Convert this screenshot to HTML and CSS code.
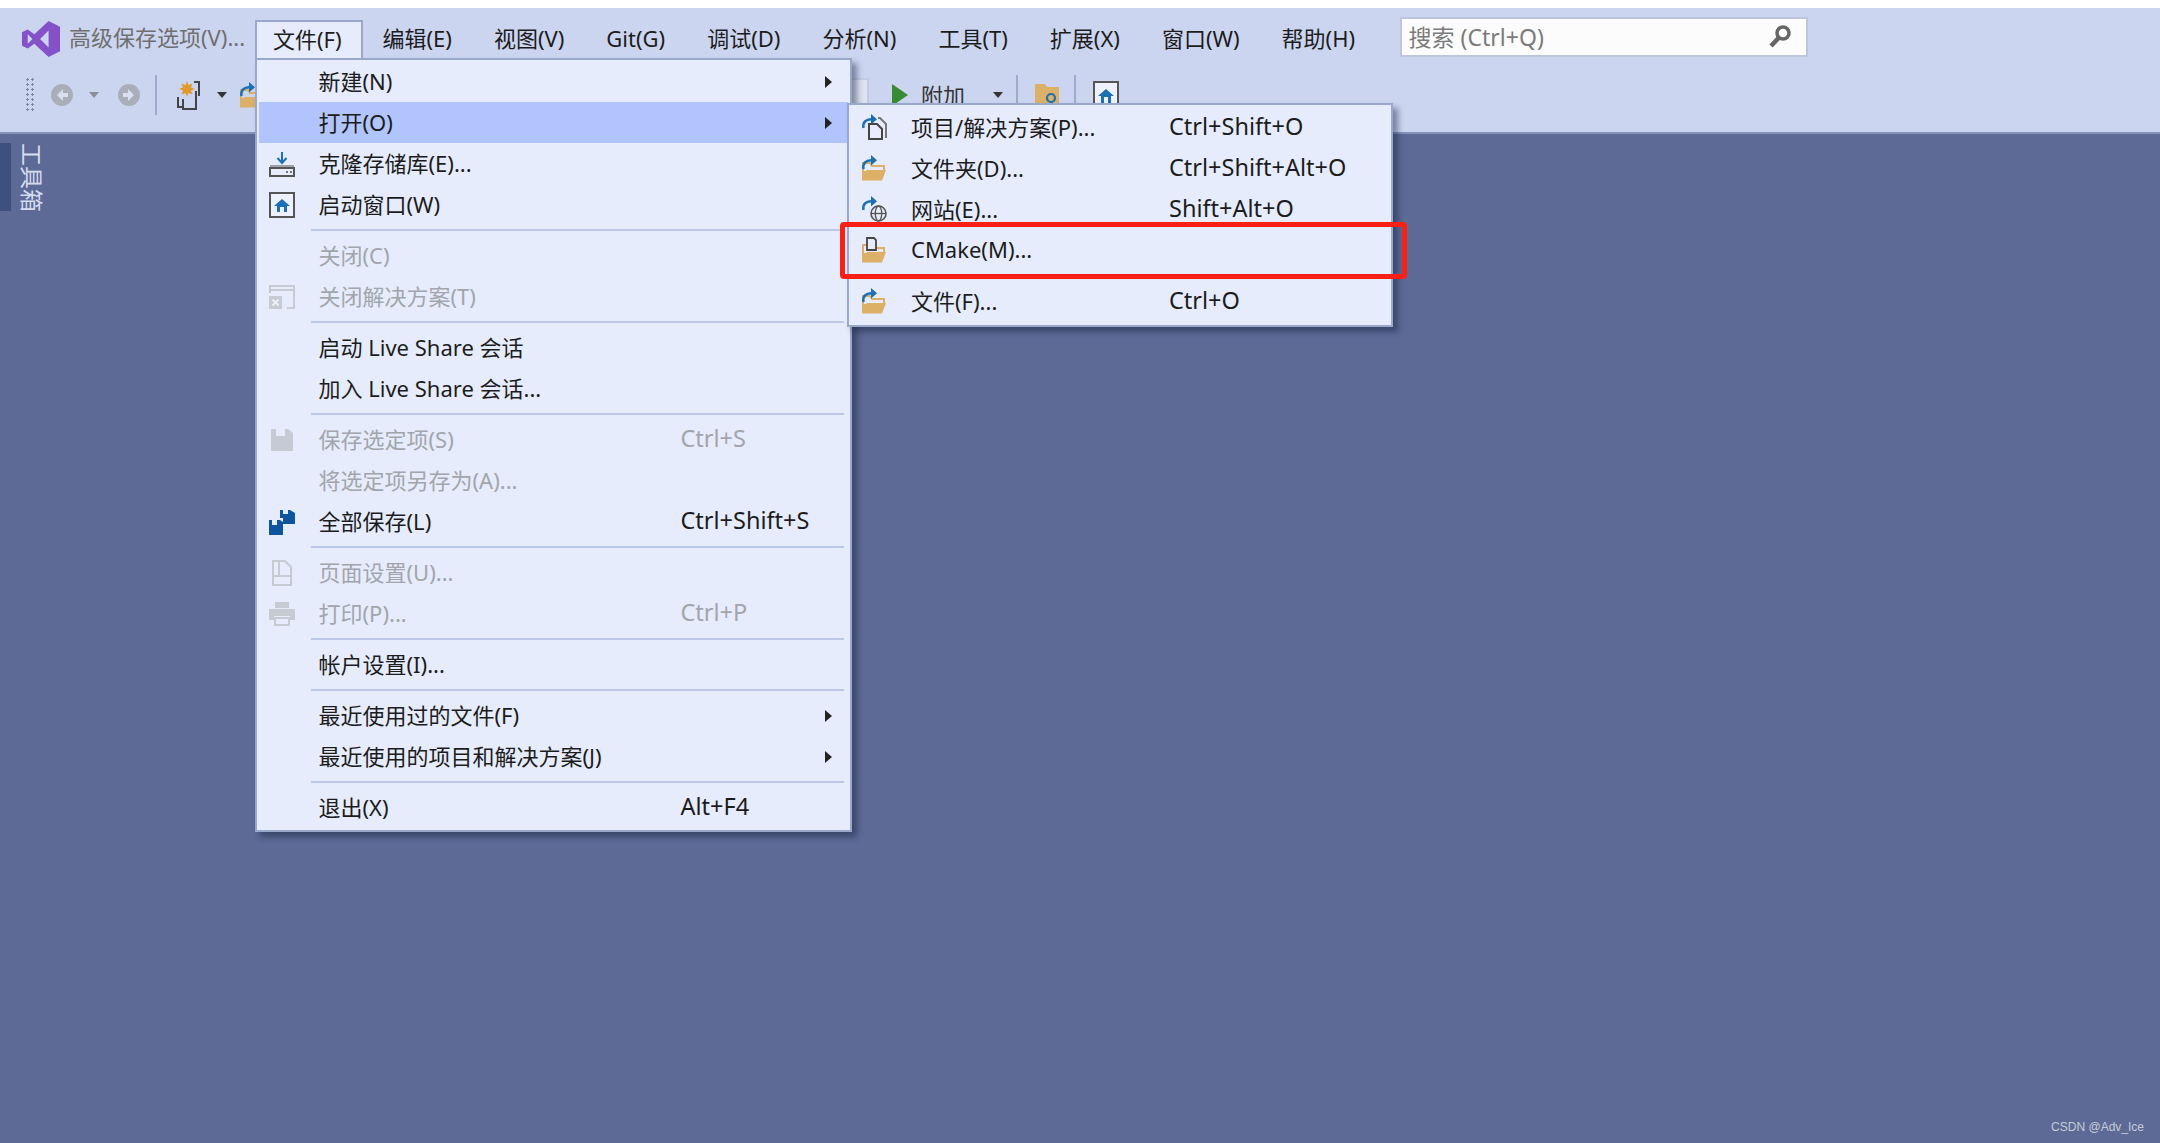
FILE: index.html
```html
<!DOCTYPE html>
<html lang="zh-CN">
<head>
  <meta charset="UTF-8" />
  <title>Visual Studio</title>
  <link rel="stylesheet" href="styles.css">
</head>
<body>
  <svg class="defs" width="0" height="0">
    <symbol id="folder" viewBox="0 0 26 26">
      <path d="M2 25V8h7l2 3h12v6" fill="none" stroke="#dcb067" stroke-width="2"/>
      <path d="M1 25.500V16h4l1-1h19l-4 10.500z" fill="#dcb067"/>
    </symbol>
    <symbol id="redo" viewBox="0 0 26 26">
      <path d="M2.500 14C1.500 8.500 5 5 10.500 5.200" fill="none" stroke="#1b6fb5" stroke-width="2.500"/>
      <path d="M10 0l6 5.300-6 5.200z" fill="#1b6fb5"/>
    </symbol>
  </svg>

  <div class="top-strip"></div>

  <header class="shell">
    <div class="titlebar">
      <svg class="logo" viewBox="0 0 40 38" width="38" height="38">
        <path fill-rule="evenodd" fill="#8551c9" d="M28 0l12 6v26l-12 6-15-14-7 5-6-3V12l6-3 7 5zM6 14v10l5-5zM28 10l-9 9 9 9z"/>
      </svg>
      <span class="doc-title">高级保存选项(V)...</span>
      <nav class="menubar">
        <span class="menu-item is-open">文件(F)</span>
        <span class="menu-item">编辑(E)</span>
        <span class="menu-item">视图(V)</span>
        <span class="menu-item">Git(G)</span>
        <span class="menu-item">调试(D)</span>
        <span class="menu-item">分析(N)</span>
        <span class="menu-item">工具(T)</span>
        <span class="menu-item">扩展(X)</span>
        <span class="menu-item">窗口(W)</span>
        <span class="menu-item">帮助(H)</span>
      </nav>
      <div class="search">
        <span class="search-text">搜索 (Ctrl+Q)</span>
        <svg viewBox="0 0 24 26" width="24" height="26">
          <circle cx="15" cy="9" r="6" fill="none" stroke="#666" stroke-width="3.500"/>
          <path d="M10.500 14L3 22" stroke="#666" stroke-width="4.500"/>
        </svg>
      </div>
    </div>

    <div class="toolbar">
      <div class="grip"></div>
      <svg class="tool nav-back" viewBox="0 0 24 24" width="24" height="24">
        <circle cx="12" cy="12" r="11" fill="#a9aeb9"/>
        <path d="M13 6l-6 6 6 6v-4h5v-4h-5z" fill="#d9dfef"/>
      </svg>
      <i class="caret caret-gray"></i>
      <svg class="tool nav-forward" viewBox="0 0 24 24" width="24" height="24">
        <circle cx="12" cy="12" r="11" fill="#a9aeb9"/>
        <path d="M11 6l6 6-6 6v-4H6v-4h5z" fill="#d9dfef"/>
      </svg>
      <i class="tool-sep sep-first"></i>
      <svg class="tool new-project" viewBox="0 0 28 36" width="28" height="36">
        <path d="M12 4l1.500 4 4-1.500L16 10.500l4 1.500-4 1.500 1.500 4-4-1.500L12 20l-1.500-4-4 1.500L8 13.500 4 12l4-1.500-1.500-4 4 1.500z" fill="#e09a2c"/>
        <path d="M19 5h5v14M8 22v10h13V14" fill="none" stroke="#444" stroke-width="2"/>
        <path d="M3 20v10h4" fill="none" stroke="#444" stroke-width="2"/>
      </svg>
      <i class="caret caret-dark"></i>
      <svg class="tool open-project" viewBox="0 0 26 26" width="26" height="26"><use href="#folder"/><use href="#redo"/></svg>

      <i class="hidden-gap"></i>
      <div class="combo-end"></div>
      <svg class="tool play" viewBox="0 0 16 22" width="16" height="22"><path d="M0 0l16 11L0 22z" fill="#388a34"/></svg>
      <span class="attach">附加</span>
      <i class="caret caret-dark attach-caret"></i>
      <i class="tool-sep sep-attach"></i>
      <svg class="tool folder-search" viewBox="0 0 26 28" width="26" height="28">
        <path d="M1 3h10l2 3h12v20H1z" fill="#dcb067"/>
        <circle cx="17" cy="17" r="4" fill="none" stroke="#1b6fb5" stroke-width="2.200"/>
        <path d="M16 21v5h3v-5" fill="#1b6fb5"/>
      </svg>
      <i class="tool-sep sep-home"></i>
      <svg class="tool home-window" viewBox="0 0 26 28" width="26" height="28">
        <rect x="1" y="1" width="24" height="26" fill="#eef1fb" stroke="#555" stroke-width="2"/>
        <path d="M13 8l-8 7h3v7h10v-7h3z" fill="#1b6fb5"/>
        <rect x="11" y="16" width="4" height="6" fill="#eef1fb"/>
      </svg>
    </div>
  </header>

  <main class="workspace">
    <aside class="toolbox">
      <i class="toolbox-bar"></i>
      <span class="toolbox-label">工具箱</span>
    </aside>
  </main>

  <!-- file menu -->
  <div class="menu file-menu">
    <div class="row"><span class="icon"></span><span class="label">新建(N)</span><i class="arrow"></i></div>
    <div class="row is-active"><span class="icon"></span><span class="label">打开(O)</span><i class="arrow"></i></div>
    <div class="row">
      <span class="icon"><svg viewBox="0 0 26 26" width="26" height="26">
        <path d="M13 1v10M8.500 7l4.500 5 4.500-5" fill="none" stroke="#1b6fb5" stroke-width="2"/>
        <rect x="1" y="17" width="24" height="8" fill="none" stroke="#555" stroke-width="2"/>
        <path d="M1 15h24" stroke="#555" stroke-width="1"/>
        <path d="M17 21h2M21 21h2" stroke="#777" stroke-width="2"/>
      </svg></span>
      <span class="label">克隆存储库(E)...</span>
    </div>
    <div class="row">
      <span class="icon"><svg viewBox="0 0 26 26" width="26" height="26">
        <rect x="1" y="1" width="24" height="24" fill="#eef1fb" stroke="#555" stroke-width="2"/>
        <path d="M13 7l-8 7h3v6h10v-6h3z" fill="#1b6fb5"/>
        <rect x="11" y="15" width="4" height="5" fill="#eef1fb"/>
      </svg></span>
      <span class="label">启动窗口(W)</span>
    </div>
    <div class="sep"></div>
    <div class="row is-disabled"><span class="icon"></span><span class="label">关闭(C)</span></div>
    <div class="row is-disabled">
      <span class="icon"><svg viewBox="0 0 26 26" width="26" height="26">
        <path d="M9 2h16v22h-7M1 9V2h8M1 6h24" fill="none" stroke="#c6cad3" stroke-width="2"/>
        <rect x="0" y="12" width="13" height="13" fill="#c6cad3"/>
        <path d="M3.500 15.500l6 6m0-6l-6 6" stroke="#eef1fb" stroke-width="1.800"/>
      </svg></span>
      <span class="label">关闭解决方案(T)</span>
    </div>
    <div class="sep"></div>
    <div class="row"><span class="icon"></span><span class="label">启动 Live Share 会话</span></div>
    <div class="row"><span class="icon"></span><span class="label">加入 Live Share 会话...</span></div>
    <div class="sep"></div>
    <div class="row is-disabled">
      <span class="icon"><svg viewBox="0 0 24 24" width="24" height="24">
        <path d="M1 1h5v7h9V1h3l5 4v18H1z" fill="#c6cad3"/>
      </svg></span>
      <span class="label">保存选定项(S)</span><span class="keys">Ctrl+S</span>
    </div>
    <div class="row is-disabled"><span class="icon"></span><span class="label">将选定项另存为(A)...</span></div>
    <div class="row">
      <span class="icon"><svg viewBox="0 0 26 26" width="26" height="26">
        <path d="M11 1h3v4h5V1h2l5 3v11H14V9h-3z" fill="#0f559e"/>
        <path d="M0 11h3v5h5v-5h3l3 2v13H0z" fill="#0f559e"/>
      </svg></span>
      <span class="label">全部保存(L)</span><span class="keys">Ctrl+Shift+S</span>
    </div>
    <div class="sep"></div>
    <div class="row is-disabled">
      <span class="icon"><svg viewBox="0 0 22 26" width="22" height="26">
        <path d="M2 1h12l6 6v18H2zM8 1v15M2 16h18" fill="none" stroke="#c6cad3" stroke-width="2"/>
      </svg></span>
      <span class="label">页面设置(U)...</span>
    </div>
    <div class="row is-disabled">
      <span class="icon"><svg viewBox="0 0 26 24" width="26" height="24">
        <path d="M6 0h14v6H6z" fill="#c6cad3"/>
        <path d="M0 7h26v11h-5v-4H5v4H0z" fill="#c6cad3"/>
        <path d="M6 16h14v7H6z" fill="none" stroke="#c6cad3" stroke-width="2"/>
      </svg></span>
      <span class="label">打印(P)...</span><span class="keys">Ctrl+P</span>
    </div>
    <div class="sep"></div>
    <div class="row"><span class="icon"></span><span class="label">帐户设置(I)...</span></div>
    <div class="sep"></div>
    <div class="row"><span class="icon"></span><span class="label">最近使用过的文件(F)</span><i class="arrow"></i></div>
    <div class="row"><span class="icon"></span><span class="label">最近使用的项目和解决方案(J)</span><i class="arrow"></i></div>
    <div class="sep"></div>
    <div class="row"><span class="icon"></span><span class="label">退出(X)</span><span class="keys">Alt+F4</span></div>
  </div>

  <!-- open submenu -->
  <div class="menu open-menu">
    <div class="row">
      <span class="icon"><svg viewBox="0 0 26 26" width="26" height="26">
        <use href="#redo"/>
        <path d="M8 10h8l5 5v10H8z" fill="none" stroke="#444" stroke-width="2"/>
        <path d="M17 4h2l6 6v14" fill="none" stroke="#777" stroke-width="2"/>
      </svg></span>
      <span class="label">项目/解决方案(P)...</span><span class="keys">Ctrl+Shift+O</span>
    </div>
    <div class="row">
      <span class="icon"><svg viewBox="0 0 26 26" width="26" height="26"><use href="#folder"/><use href="#redo"/></svg></span>
      <span class="label">文件夹(D)...</span><span class="keys">Ctrl+Shift+Alt+O</span>
    </div>
    <div class="row">
      <span class="icon"><svg viewBox="0 0 26 26" width="26" height="26">
        <use href="#redo"/>
        <circle cx="17.500" cy="17.500" r="7.500" fill="none" stroke="#555" stroke-width="1.600"/>
        <ellipse cx="17.500" cy="17.500" rx="3.200" ry="7.500" fill="none" stroke="#555" stroke-width="1.300"/>
        <path d="M10 17.500h15" stroke="#555" stroke-width="1.300"/>
      </svg></span>
      <span class="label">网站(E)...</span><span class="keys">Shift+Alt+O</span>
    </div>
    <div class="row">
      <span class="icon"><svg viewBox="0 0 26 26" width="26" height="26">
        <use href="#folder"/>
        <path d="M6 1h7l2 2v10H6z" fill="#e6ecfc" stroke="#444" stroke-width="1.800"/>
      </svg></span>
      <span class="label">CMake(M)...</span>
    </div>
    <div class="sep"></div>
    <div class="row">
      <span class="icon"><svg viewBox="0 0 26 26" width="26" height="26"><use href="#folder"/><use href="#redo"/></svg></span>
      <span class="label">文件(F)...</span><span class="keys">Ctrl+O</span>
    </div>
  </div>

  <div class="callout"></div>
  <div class="watermark">CSDN @Adv_Ice</div>
</body>
</html>
```

FILE: styles.css
```css
/* base */
* { box-sizing: border-box; }
html, body { height: 100%; }
body {
  margin: 0;
  height: 1143px;
  overflow: hidden;
  display: flex;
  flex-direction: column;
  position: relative;
  background: #5d6a96;
  color: #1c1c1c;
  font-family: "Noto Sans", "Noto Sans CJK SC", sans-serif;
  font-size: 22px;
}
.defs { position: absolute; }
svg { display: block; }

.top-strip { height: 8px; background: #fff; }

/* title + toolbar */
.shell {
  height: 126px;
  background: #ccd5f0;
  border-bottom: 2px solid #8493bb;
}
.titlebar {
  display: flex;
  align-items: flex-start;
  height: 50px;
  padding-left: 22px;
}
.logo { margin-top: 12px; }
.doc-title {
  margin: 13px 0 0 9px;
  width: 186px;
  color: #6f6f6f;
  white-space: nowrap;
  line-height: 32px;
}
.menubar { display: flex; }
.menu-item {
  padding: 0 21px;
  height: 38px;
  margin-top: 13px;
  line-height: 34px;
  white-space: nowrap;
}
.menu-item.is-open {
  position: relative;
  z-index: 3;
  height: 38px;
  width: 108px;
  padding: 0 16px;
  margin-top: 12px;
  margin-right: -1.500px;
  background: #e6ecfc;
  border: 2px solid #9aa8cc;
  border-bottom: 0;
}
.search {
  display: flex;
  align-items: center;
  justify-content: space-between;
  width: 408px;
  height: 40px;
  margin: 9px 0 0 23.500px;
  padding: 0 14px 0 7px;
  background: #fcfcfc;
  border: 2px solid #bcc5d9;
  color: #7b7b7b;
  white-space: nowrap;
}
.search-text { margin-top: -2px; font-size: 23px; }

.toolbar {
  display: flex;
  align-items: center;
  height: 74px;
  padding: 0 0 0 25px;
}
.grip {
  width: 11px;
  height: 36px;
  background-image: radial-gradient(#7f8798 1px, transparent 1.300px);
  background-size: 5px 5px;
}
.tool { flex: none; }
.nav-back { margin-left: 14px; }
.nav-forward { margin-left: 18px; }
.caret {
  flex: none;
  width: 0;
  height: 0;
  margin-left: 15px;
  border: 5px solid transparent;
  border-top: 6px solid #333;
  border-bottom: 0;
}
.caret-gray { border-top-color: #8b8f99; }
.caret-dark { margin-left: 7px; }
.tool-sep {
  flex: none;
  width: 2px;
  height: 40px;
  background: #9dabcd;
}
.sep-first { margin: 0 18px 0 14px; }
.new-project { margin-right: 7px; }
.open-project { margin-left: 12px; }
.hidden-gap { flex: none; width: 587px; }
.combo-end {
  flex: none;
  width: 17px;
  height: 34px;
  background: #dde3f2;
  border: 2px solid #c3cbdf;
  border-left: 0;
}
.play { margin-left: 22.500px; }
.attach { margin-left: 13.500px; line-height: 40px; color: #333; width: 45px; white-space: nowrap; }
.attach-caret { margin-left: 27px; }
.sep-attach { margin: 0 16px 0 13px; }
.sep-home { margin: 0 17px 0 14px; }

/* workspace */
.workspace { flex: 1; }
.toolbox {
  display: flex;
  align-items: flex-start;
  height: 72px;
  margin-top: 9px;
}
.toolbox-bar { width: 11px; height: 68px; background: #3e5080; }
.toolbox-label {
  margin-left: 8px;
  writing-mode: vertical-rl;
  text-orientation: sideways;
  color: #d6dcef;
  font-size: 23px;
  line-height: 26px;
}

/* menus */
.menu {
  position: absolute;
  z-index: 2;
  background: #e6ecfc;
  border: 2px solid #9aa8cc;
  box-shadow: 5px 5px 6px rgba(20, 28, 60, 0.45);
}
.file-menu {
  left: 255px;
  top: 58px;
  width: 597px;
  height: 774px;
  padding: 1px 2px;
}
.open-menu {
  left: 847px;
  top: 103px;
  width: 546px;
  height: 224px;
  padding: 1px 0;
}
.row {
  position: relative;
  display: flex;
  align-items: center;
  height: 41px;
  white-space: nowrap;
}
.row.is-active { background: #b1c5fc; }
.row.is-disabled { color: #a2a5ab; }
.icon {
  display: flex;
  align-items: center;
  justify-content: center;
  flex: none;
  width: 46px;
  margin-right: 13.500px;
}
.open-menu .icon { width: 50px; margin-right: 12px; }
.label { flex: none; width: 362px; padding-bottom: 3px; }
.open-menu .label { width: 258px; padding-bottom: 2px; }
.keys { flex: none; font-size: 23.500px; padding-bottom: 3px; }
.open-menu .keys { padding-bottom: 1px; }
.arrow {
  position: absolute;
  right: 16px;
  top: 15px;
  border: 6px solid transparent;
  border-left: 7px solid #222;
  border-right: 0;
}
.sep {
  height: 2px;
  margin: 4px 4px 4px 52px;
  background: #bcc8e8;
}
.open-menu .sep { margin-right: 0; }

/* red annotation */
.callout {
  position: absolute;
  z-index: 4;
  left: 840px;
  top: 222px;
  width: 567px;
  height: 57px;
  border: 5px solid #fb2016;
  border-radius: 4px;
}
.watermark {
  position: absolute;
  right: 16px;
  bottom: 9px;
  font-family: "Liberation Sans", sans-serif;
  font-size: 12px;
  color: #c6cad8;
}
```
